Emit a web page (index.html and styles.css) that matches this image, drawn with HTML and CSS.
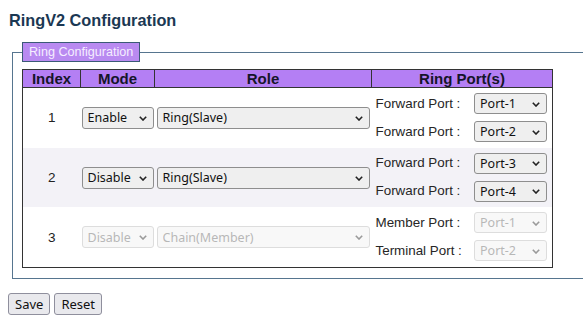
FILE: index.html
```html
<!DOCTYPE html>
<html>
<head>
<meta charset="utf-8">
<link rel="stylesheet" href="styles.css">
</head>
<body>
<h1 class="title">RingV2 Configuration</h1>
<fieldset class="box">
  <legend class="box-legend">Ring Configuration</legend>
  <table class="grid">
    <colgroup>
      <col class="c-index"><col class="c-mode"><col class="c-role"><col class="c-port">
    </colgroup>
    <thead>
      <tr><th>Index</th><th>Mode</th><th>Role</th><th>Ring Port(s)</th></tr>
    </thead>
    <tbody>
      <tr>
        <td class="idx">1</td>
        <td class="mode"><span class="sel sel-mode"><select><option>Enable</option></select><svg class="chev" viewBox="0 0 8 5"><path d="M0.8 0.8 L4 4 L7.2 0.8"/></svg></span></td>
        <td class="role"><span class="sel sel-role"><select><option>Ring(Slave)</option></select><svg class="chev" viewBox="0 0 8 5"><path d="M0.8 0.8 L4 4 L7.2 0.8"/></svg></span></td>
        <td class="ports">
          <div class="pline"><span class="plabel">Forward Port :</span><span class="sel sel-port"><select><option>Port-1</option></select><svg class="chev" viewBox="0 0 8 5"><path d="M0.8 0.8 L4 4 L7.2 0.8"/></svg></span></div>
          <div class="pline"><span class="plabel">Forward Port :</span><span class="sel sel-port"><select><option>Port-2</option></select><svg class="chev" viewBox="0 0 8 5"><path d="M0.8 0.8 L4 4 L7.2 0.8"/></svg></span></div>
        </td>
      </tr>
      <tr class="alt">
        <td class="idx">2</td>
        <td class="mode"><span class="sel sel-mode"><select><option>Disable</option></select><svg class="chev" viewBox="0 0 8 5"><path d="M0.8 0.8 L4 4 L7.2 0.8"/></svg></span></td>
        <td class="role"><span class="sel sel-role"><select><option>Ring(Slave)</option></select><svg class="chev" viewBox="0 0 8 5"><path d="M0.8 0.8 L4 4 L7.2 0.8"/></svg></span></td>
        <td class="ports">
          <div class="pline"><span class="plabel">Forward Port :</span><span class="sel sel-port"><select><option>Port-3</option></select><svg class="chev" viewBox="0 0 8 5"><path d="M0.8 0.8 L4 4 L7.2 0.8"/></svg></span></div>
          <div class="pline"><span class="plabel">Forward Port :</span><span class="sel sel-port"><select><option>Port-4</option></select><svg class="chev" viewBox="0 0 8 5"><path d="M0.8 0.8 L4 4 L7.2 0.8"/></svg></span></div>
        </td>
      </tr>
      <tr>
        <td class="idx">3</td>
        <td class="mode"><span class="sel sel-mode dis"><select disabled><option>Disable</option></select><svg class="chev" viewBox="0 0 8 5"><path d="M0.8 0.8 L4 4 L7.2 0.8"/></svg></span></td>
        <td class="role"><span class="sel sel-role dis"><select disabled><option>Chain(Member)</option></select><svg class="chev" viewBox="0 0 8 5"><path d="M0.8 0.8 L4 4 L7.2 0.8"/></svg></span></td>
        <td class="ports">
          <div class="pline"><span class="plabel">Member Port :</span><span class="sel sel-port dis"><select disabled><option>Port-1</option></select><svg class="chev" viewBox="0 0 8 5"><path d="M0.8 0.8 L4 4 L7.2 0.8"/></svg></span></div>
          <div class="pline"><span class="plabel">Terminal Port :</span><span class="sel sel-port dis"><select disabled><option>Port-2</option></select><svg class="chev" viewBox="0 0 8 5"><path d="M0.8 0.8 L4 4 L7.2 0.8"/></svg></span></div>
        </td>
      </tr>
    </tbody>
  </table>
</fieldset>
<div class="actions">
  <button class="btn btn-save">Save</button>
  <button class="btn btn-reset">Reset</button>
</div>
</body>
</html>
```

FILE: styles.css
```css
html, body {
  margin: 0;
  padding: 0;
  overflow: hidden;
  background: #ffffff;
}
body {
  font-family: "Liberation Sans", Arial, sans-serif;
  color: #222;
}
.title {
  margin: 0 0 0 9px;
  padding-top: 11px;
  font-size: 16.3px;
  line-height: 19px;
  font-weight: bold;
  color: #1b3853;
}
.box {
  margin: 12px 0 0 12px;
  width: 640px;
  padding: 7px 9px 10px 9px;
  border: 1px solid #56758f;
  border-right: none;
  min-width: 0;
}
.box-legend {
  padding: 0 6px;
  height: 18px;
  line-height: 18px;
  border: 1px solid #3b5a77;
  background: #b98af1;
  color: #f5eeff;
  font-size: 12.6px;
}
.grid {
  border-collapse: collapse;
  table-layout: fixed;
  width: 530px;
  border: 1px solid #333;
}
.c-index { width: 58px; }
.c-mode { width: 74px; }
.c-role { width: 217px; }
.c-port { width: 181px; }
.grid th {
  background: #b47ff4;
  border: 1px solid #333;
  font-size: 15px;
  font-weight: bold;
  color: #15152a;
  height: 17px;
  line-height: 17px;
  padding: 0;
}
.grid td {
  padding: 0;
  vertical-align: middle;
}
.grid tr.alt td {
  background: #f3f2f7;
}
.idx {
  text-align: center;
  font-size: 13.5px;
  color: #222;
}
.mode {
  padding: 0 0 0 1px !important;
}
.role {
  padding: 0 0 0 2px !important;
}
.ports {
  padding: 5px 5px 5.7px 4px !important;
}
.pline {
  display: flex;
  justify-content: space-between;
  align-items: center;
  height: 21px;
}
.pline + .pline {
  margin-top: 7px;
}
.plabel {
  font-size: 13.4px;
  line-height: 16px;
  color: #262626;
  white-space: nowrap;
}
.sel {
  position: relative;
  display: inline-block;
  vertical-align: middle;
}
.sel select {
  appearance: none;
  -webkit-appearance: none;
  display: block;
  margin: 0;
  box-sizing: border-box;
  border: 1px solid #8e8e8e;
  border-radius: 3px;
  background: #efefef;
  color: #111;
  font-family: "Noto Sans", "Open Sans", sans-serif;
  font-size: 12.5px;
  padding: 0 0 0 5px;
  outline: none;
}
.sel-mode select { width: 72px; height: 22px; }
.sel-role select { width: 213px; height: 22px; }
.sel-port select { width: 73px; height: 21px; }
.chev {
  position: absolute;
  right: 7px;
  top: 50%;
  width: 8px;
  height: 5px;
  margin-top: -2px;
  fill: none;
  stroke: #222;
  stroke-width: 1.6;
  pointer-events: none;
}
.sel.dis select {
  background: #f6f6f6;
  border-color: #cfcfcf;
  color: #9a9a9a;
}
.sel.dis .chev {
  stroke: #9a9a9a;
}
.actions {
  display: flex;
  gap: 4px;
  margin: 14px 0 0 8px;
}
.btn {
  font-family: "Noto Sans", "Open Sans", sans-serif;
  font-size: 13px;
  color: #111;
  background: #e9e9ed;
  border: 1px solid #8f8f9d;
  border-radius: 3px;
  height: 22px;
  padding: 0 6px;
  margin: 0;
}
```
